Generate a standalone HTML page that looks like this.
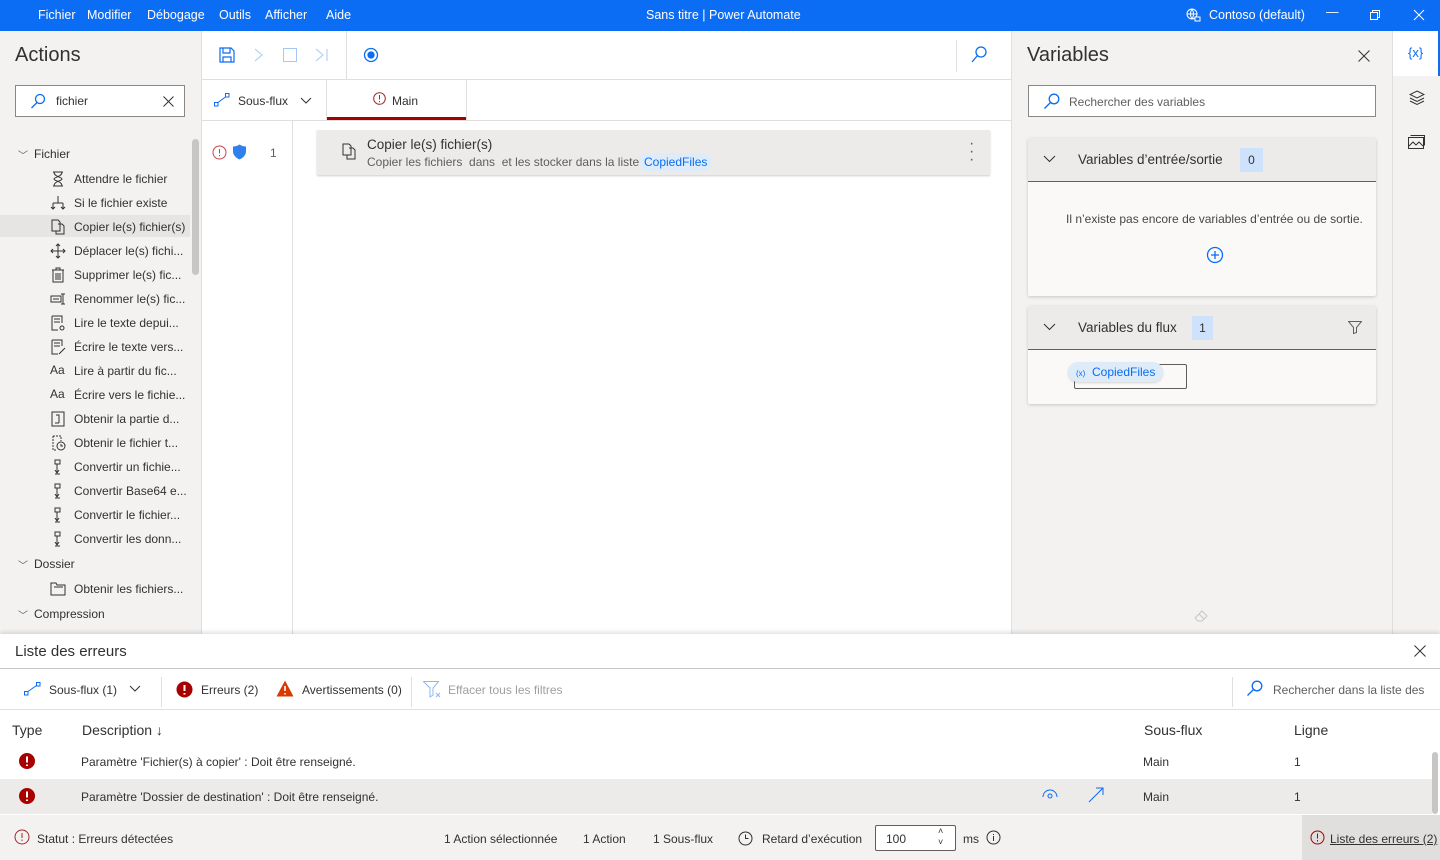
<!DOCTYPE html>
<html><head><meta charset="utf-8"><style>
*{box-sizing:border-box;margin:0;padding:0}
body{width:1440px;height:860px;overflow:hidden;font-family:"Liberation Sans",sans-serif;font-size:12px;color:#323130;position:relative;background:#fff}
.abs{position:absolute}
.title{left:0;top:0;width:1440px;height:31px;background:#0b6cf4;color:#fff;font-size:12.5px}
.title span{position:absolute;top:8px}
.left{left:0;top:31px;width:202px;height:603px;background:#f3f2f1;border-right:1px solid #e1dfdd}
.it{position:absolute;left:74px;font-size:12px;color:#323130}
.ic{position:absolute;left:50px;width:16px;height:16px}
.grp{position:absolute;left:34px;font-size:12px}
.chev{position:absolute;left:18px;font-size:10px;color:#605e5c}
.center{left:202px;top:31px;width:809px;height:603px;background:#fff}
.var{left:1011px;top:31px;width:381px;height:603px;background:#f3f2f1;border-left:1px solid #e1dfdd}
.strip{left:1392px;top:31px;width:48px;height:603px;background:#f3f2f1;border-left:1px solid #e1dfdd}
.card{background:#faf9f8;box-shadow:0 1px 3px rgba(0,0,0,.18);border-radius:2px}
.bottom{left:0;top:634px;width:1440px;height:226px;background:#fff;box-shadow:0 -2px 4px rgba(0,0,0,.12)}
</style></head><body>
<div class="abs title">
<span style="left:38px">Fichier</span><span style="left:87px">Modifier</span><span style="left:147px">Débogage</span><span style="left:219px">Outils</span><span style="left:265px">Afficher</span><span style="left:326px">Aide</span>
<span style="left:646px">Sans titre | Power Automate</span>
<svg class="abs" style="left:1185px;top:8px" width="16" height="14" viewBox="0 0 16 14" fill="none" stroke="#fff"><circle cx="7" cy="6" r="5"/><path d="M2 6h10M7 1c-2 3-2 7 0 10M7 1c2 3 2 7 0 10"/><path d="M10 9h5v4h-5z" fill="#0b6cf4"/></svg>
<span style="left:1209px">Contoso (default)</span>
<span style="left:1326px;top:5px">—</span>
<svg class="abs" style="left:1370px;top:10px" width="10" height="10" fill="none" stroke="#fff"><rect x="0.5" y="2.5" width="7" height="7"/><path d="M2.5 2.5v-2h7v7h-2"/></svg>
<svg class="abs" style="left:1413px;top:9px" width="12" height="12" stroke="#fff"><path d="M1 1l10 10M11 1L1 11"/></svg>
</div>

<div class="abs left">
<div class="abs" style="left:15px;top:13px;font-size:20px;color:#323130">Actions</div>
<div class="abs" style="left:15px;top:54px;width:170px;height:32px;background:#fff;border:1px solid #8a8886">
<svg class="abs" style="left:14px;top:7px" width="16" height="16" fill="none" stroke="#0b6cf4" stroke-width="1.3"><circle cx="10" cy="6" r="4.5"/><path d="M7 9.5L1.5 15"/></svg>
<span class="abs" style="left:40px;top:8px">fichier</span>
<svg class="abs" style="left:147px;top:10px" width="11" height="11" stroke="#323130"><path d="M.5.5l10 10M10.5.5l-10 10"/></svg>
</div>
<div class="chev" style="top:116px">﹀</div><div class="grp" style="top:116px">Fichier</div>
<div class="abs" style="left:0;top:184px;width:190px;height:22px;background:#e6e5e3"></div>
<div class="abs" style="left:192px;top:108px;width:7px;height:136px;background:#c8c6c4;border-radius:4px"></div>
<svg class="ic" style="top:140px" viewBox="0 0 16 16" fill="none" stroke="#323130"><path d="M3 1h10M3 15h10M4 1c0 5 8 5 8 7s-8 2-8 7M12 1c0 5-8 5-8 7s8 2 8 7"/></svg>
<div class="it" style="top:141px">Attendre le fichier</div>
<svg class="ic" style="top:164px" viewBox="0 0 16 16" fill="none" stroke="#323130"><path d="M8 1v7M3 8h10M3 8v6M13 8v6M1 12l2 2 2-2M11 12l2 2 2-2"/></svg>
<div class="it" style="top:165px">Si le fichier existe</div>
<svg class="ic" style="top:188px" viewBox="0 0 16 16" fill="none" stroke="#323130"><path d="M2 1h6l2 2v9H2zM8 5h4l2 2v8H6v-3"/></svg>
<div class="it" style="top:189px">Copier le(s) fichier(s)</div>
<svg class="ic" style="top:212px" viewBox="0 0 16 16" fill="none" stroke="#323130"><path d="M8 1v14M1 8h14M6 3l2-2 2 2M6 13l2 2 2-2M3 6L1 8l2 2M13 6l2 2-2 2"/></svg>
<div class="it" style="top:213px">Déplacer le(s) fichi...</div>
<svg class="ic" style="top:236px" viewBox="0 0 16 16" fill="none" stroke="#323130"><path d="M2 3h12M6 3V1h4v2M3 3v12h10V3M6 6v7M8 6v7M10 6v7"/></svg>
<div class="it" style="top:237px">Supprimer le(s) fic...</div>
<svg class="ic" style="top:260px" viewBox="0 0 16 16" fill="none" stroke="#323130"><path d="M1 5h10v6H1zM3 8h6M11 3h4M11 13h4M13 3v10"/></svg>
<div class="it" style="top:261px">Renommer le(s) fic...</div>
<svg class="ic" style="top:284px" viewBox="0 0 16 16" fill="none" stroke="#323130"><path d="M2 1h10v7M2 1v14h6M4 4h6M4 7h6"/><circle cx="12" cy="13" r="2"/></svg>
<div class="it" style="top:285px">Lire le texte depui...</div>
<svg class="ic" style="top:308px" viewBox="0 0 16 16" fill="none" stroke="#323130"><path d="M2 1h10v6M2 1v14h6M4 4h6M4 7h6M9 15l6-6"/></svg>
<div class="it" style="top:309px">Écrire le texte vers...</div>
<div class="ic" style="top:332px;font-size:12px">Aa</div><div class="it" style="top:333px">Lire à partir du fic...</div>
<div class="ic" style="top:356px;font-size:12px">Aa</div><div class="it" style="top:357px">Écrire vers le fichie...</div>
<svg class="ic" style="top:380px" viewBox="0 0 16 16" fill="none" stroke="#323130"><path d="M2 1h12v14H2zM6 4h3v8M5 12h4"/></svg>
<div class="it" style="top:381px">Obtenir la partie d...</div>
<svg class="ic" style="top:404px" viewBox="0 0 16 16" fill="none" stroke="#323130"><path d="M3 1h8v5M3 1v14h4" stroke-dasharray="2 1"/><circle cx="11" cy="11" r="4"/><path d="M11 9v2h2"/></svg>
<div class="it" style="top:405px">Obtenir le fichier t...</div>
<svg class="ic" style="top:428px" viewBox="0 0 16 16" fill="none" stroke="#323130"><path d="M5 1h5v4H5zM7 5v8M5 11l2 3 2-3M5 15h5"/></svg>
<div class="it" style="top:429px">Convertir un fichie...</div>
<svg class="ic" style="top:452px" viewBox="0 0 16 16" fill="none" stroke="#323130"><path d="M5 1h5v4H5zM7 5v8M5 11l2 3 2-3M5 15h5"/></svg>
<div class="it" style="top:453px">Convertir Base64 e...</div>
<svg class="ic" style="top:476px" viewBox="0 0 16 16" fill="none" stroke="#323130"><path d="M5 1h5v4H5zM7 5v8M5 11l2 3 2-3M5 15h5"/></svg>
<div class="it" style="top:477px">Convertir le fichier...</div>
<svg class="ic" style="top:500px" viewBox="0 0 16 16" fill="none" stroke="#323130"><path d="M5 1h5v4H5zM7 5v8M5 11l2 3 2-3M5 15h5"/></svg>
<div class="it" style="top:501px">Convertir les donn...</div>
<div class="chev" style="top:526px">﹀</div><div class="grp" style="top:526px">Dossier</div>
<svg class="ic" style="top:550px" viewBox="0 0 16 16" fill="none" stroke="#323130"><path d="M1 2h5l1 2h8v10H1zM4 6h9"/></svg>
<div class="it" style="top:551px">Obtenir les fichiers...</div>
<div class="chev" style="top:576px">﹀</div><div class="grp" style="top:576px">Compression</div>
</div>

<div class="abs center">
<div class="abs" style="left:0;top:48px;width:809px;height:1px;background:#e1dfdd"></div>
<svg class="abs" style="left:17px;top:16px" width="16" height="16" fill="none" stroke="#0b6cf4" stroke-width="1.2"><path d="M1 1h11l3 3v11H1zM4 1v5h7V1M4 15v-5h8v5"/></svg>
<svg class="abs" style="left:52px;top:17px" width="10" height="14" fill="none" stroke="#a6c8f5"><path d="M1 1l7 6-7 6"/></svg>
<svg class="abs" style="left:81px;top:17px" width="15" height="15" fill="none" stroke="#a6c8f5"><rect x=".5" y=".5" width="13" height="13"/></svg>
<svg class="abs" style="left:113px;top:17px" width="14" height="14" fill="none" stroke="#a6c8f5"><path d="M1 1l7 6-7 6M12 1v12"/></svg>
<div class="abs" style="left:144px;top:0;width:1px;height:48px;background:#e1dfdd"></div>
<svg class="abs" style="left:161px;top:16px" width="16" height="16" fill="none" stroke="#0b6cf4" stroke-width="1.3"><circle cx="8" cy="8" r="6.5"/><circle cx="8" cy="8" r="3" fill="#0b6cf4"/></svg>
<div class="abs" style="left:754px;top:9px;width:1px;height:32px;background:#e1dfdd"></div>
<svg class="abs" style="left:769px;top:15px" width="16" height="17" fill="none" stroke="#0b6cf4" stroke-width="1.3"><circle cx="10" cy="6" r="5"/><path d="M6.5 9.5L1 16"/></svg>
<div class="abs" style="left:0;top:89px;width:809px;height:1px;background:#e1dfdd"></div>
<svg class="abs" style="left:12px;top:62px" width="16" height="14" fill="none" stroke="#0b6cf4"><rect x=".5" y="9.5" width="3.5" height="3.5"/><rect x="11.5" y=".5" width="3.5" height="3.5"/><path d="M4 9.5l7.5-5.5"/></svg>
<span class="abs" style="left:36px;top:63px">Sous-flux</span>
<svg class="abs" style="left:98px;top:66px" width="12" height="7" fill="none" stroke="#323130"><path d="M1 1l5 5 5-5"/></svg>
<div class="abs" style="left:124px;top:49px;width:1px;height:40px;background:#e1dfdd"></div>
<div class="abs" style="left:264px;top:49px;width:1px;height:40px;background:#e1dfdd"></div>
<div class="abs" style="left:125px;top:86px;width:139px;height:3px;background:#a80000"></div>
<svg class="abs" style="left:171px;top:61px" width="13" height="13" fill="none" stroke="#a4262c"><circle cx="6.5" cy="6.5" r="5.8"/><path d="M6.5 3v4.5M6.5 9v1.2"/></svg>
<span class="abs" style="left:190px;top:63px">Main</span>
<div class="abs" style="left:90px;top:90px;width:1px;height:513px;background:#e1dfdd"></div>
<svg class="abs" style="left:10px;top:114px" width="15" height="15" fill="none" stroke="#c4484e"><circle cx="7.5" cy="7.5" r="6.5"/><path d="M7.5 4v4.5M7.5 10v1.2"/></svg>
<svg class="abs" style="left:30px;top:113px" width="15" height="16"><path d="M7.5 0.5C5 2 3 2.5 1 2.5v5C1 11 4 14 7.5 15.5 11 14 14 11 14 7.5v-5c-2 0-4-.5-6.5-2z" fill="#2f80ed"/></svg>
<span class="abs" style="left:68px;top:115px;color:#605e5c">1</span>
<div class="abs" style="left:115px;top:99px;width:673px;height:45px;background:#edebe9;box-shadow:0 1px 2px rgba(0,0,0,.2)">
<svg class="abs" style="left:25px;top:13px" width="15" height="18" fill="none" stroke="#323130"><path d="M1 1h6l2 2v9H1zM7 5h4l2 2v9H5v-4"/></svg>
<span class="abs" style="left:50px;top:7px;font-size:13.5px;color:#323130">Copier le(s) fichier(s)</span>
<span class="abs" style="left:50px;top:25px;color:#605e5c">Copier les fichiers &nbsp;dans &nbsp;et les stocker dans la liste</span>
<span class="abs" style="left:322px;top:23px;padding:2px 5px;background:#deecf9;border-radius:8px;color:#0b6cf4">CopiedFiles</span>
<span class="abs" style="left:652px;top:10px;font-size:16px;color:#605e5c;line-height:8px">·<br>·<br>·</span>
</div>
</div>

<div class="abs var">
<div class="abs" style="left:15px;top:13px;font-size:20px">Variables</div>
<svg class="abs" style="left:346px;top:19px" width="12" height="12" stroke="#323130"><path d="M.5.5l11 11M11.5.5l-11 11"/></svg>
<div class="abs" style="left:16px;top:54px;width:348px;height:32px;background:#fff;border:1px solid #8a8886">
<svg class="abs" style="left:14px;top:7px" width="17" height="17" fill="none" stroke="#0b6cf4" stroke-width="1.3"><circle cx="11" cy="6" r="4.8"/><path d="M7.5 9.5L1.5 15.5"/></svg>
<span class="abs" style="left:40px;top:9px;color:#605e5c">Rechercher des variables</span>
</div>
<div class="abs card" style="left:16px;top:107px;width:348px;height:158px">
<div class="abs" style="left:0;top:0;width:348px;height:44px;background:#edebe9;border-bottom:1px solid #0b6cf4"></div>
<svg class="abs" style="left:15px;top:17px" width="13" height="8" fill="none" stroke="#323130"><path d="M1 1l5.5 5.5L12 1"/></svg>
<span class="abs" style="left:50px;top:14px;font-size:13.5px">Variables d’entrée/sortie</span>
<span class="abs" style="left:212px;top:10px;width:23px;height:24px;background:#cfe2fb;text-align:center;line-height:24px">0</span>
<span class="abs" style="left:38px;top:74px;font-size:12px;color:#484644">Il n’existe pas encore de variables d’entrée ou de sortie.</span>
<svg class="abs" style="left:178px;top:108px" width="18" height="18" fill="none" stroke="#0b6cf4" stroke-width="1.3"><circle cx="9" cy="9" r="7.5"/><path d="M9 5v8M5 9h8"/></svg>
</div>
<div class="abs card" style="left:16px;top:275px;width:348px;height:98px">
<div class="abs" style="left:0;top:0;width:348px;height:44px;background:#edebe9;border-bottom:1px solid #0b6cf4"></div>
<svg class="abs" style="left:15px;top:17px" width="13" height="8" fill="none" stroke="#323130"><path d="M1 1l5.5 5.5L12 1"/></svg>
<span class="abs" style="left:50px;top:14px;font-size:13.5px">Variables du flux</span>
<span class="abs" style="left:164px;top:10px;width:21px;height:24px;background:#cfe2fb;text-align:center;line-height:24px">1</span>
<svg class="abs" style="left:320px;top:15px" width="14" height="13" fill="none" stroke="#605e5c"><path d="M.5.5h13L8.5 6.5v5l-3 1v-6z"/></svg>
<div class="abs" style="left:46px;top:58px;width:113px;height:25px;border:1px solid #605e5c;border-radius:2px"></div>
<span class="abs" style="left:40px;top:56px;padding:3px 8px;background:#deecf9;border-radius:10px;color:#0b6cf4;box-shadow:0 1px 2px rgba(0,0,0,.15)"><span style="font-size:8px">(x)</span>&nbsp; CopiedFiles</span>
</div>
<svg class="abs" style="left:182px;top:578px" width="16" height="14" fill="none" stroke="#c8c6c4"><path d="M1 9l7-7 5 5-5 5H4zM5 5l5 5"/></svg>
</div>

<div class="abs strip">
<div class="abs" style="left:0;top:0;width:48px;height:45px;background:#fff"></div>
<div class="abs" style="left:45px;top:0;width:3px;height:45px;background:#0b6cf4"></div>
<span class="abs" style="left:15px;top:14px;color:#0b6cf4;font-size:13px">{x}</span>
<svg class="abs" style="left:16px;top:59px" width="16" height="16" fill="none" stroke="#323130"><path d="M8 1l7 3.5-7 3.5-7-3.5zM1 8l7 3.5L15 8M1 11l7 3.5 7-3.5"/></svg>
<svg class="abs" style="left:15px;top:104px" width="17" height="14" fill="none" stroke="#323130"><rect x=".5" y="2.5" width="15" height="11"/><path d="M2.5.5h14v10M1 11l4-4 3 3 3-3 4 4"/></svg>
</div>

<div class="abs bottom">
<span class="abs" style="left:15px;top:9px;font-size:15px">Liste des erreurs</span>
<svg class="abs" style="left:1414px;top:11px" width="12" height="12" stroke="#323130"><path d="M.5.5l11 11M11.5.5l-11 11"/></svg>
<div class="abs" style="left:0;top:34px;width:1440px;height:1px;background:#c8c6c4"></div>
<svg class="abs" style="left:24px;top:48px" width="17" height="14" fill="none" stroke="#0b6cf4"><rect x=".5" y="9.5" width="3.5" height="3.5"/><rect x="12.5" y=".5" width="3.5" height="3.5"/><path d="M4 9.5l8.5-6"/></svg>
<span class="abs" style="left:49px;top:49px">Sous-flux (1)</span>
<svg class="abs" style="left:129px;top:51px" width="12" height="7" fill="none" stroke="#323130"><path d="M1 1l5 5 5-5"/></svg>
<div class="abs" style="left:161px;top:43px;width:1px;height:30px;background:#e1dfdd"></div>
<svg class="abs" style="left:176px;top:47px" width="17" height="17"><circle cx="8.5" cy="8.5" r="8" fill="#a80000"/><path d="M8.5 4v6M8.5 12v1.5" stroke="#fff" stroke-width="2"/></svg>
<span class="abs" style="left:201px;top:49px">Erreurs (2)</span>
<svg class="abs" style="left:276px;top:46px" width="18" height="17"><path d="M9 .5L17.5 16.5H.5z" fill="#d83b01"/><path d="M9 6v5M9 13v1.5" stroke="#fff" stroke-width="1.6"/></svg>
<span class="abs" style="left:302px;top:49px">Avertissements (0)</span>
<div class="abs" style="left:411px;top:43px;width:1px;height:30px;background:#e1dfdd"></div>
<svg class="abs" style="left:423px;top:47px" width="18" height="17" fill="none" stroke="#8ab8f5"><path d="M.5.5h15L10 7v7l-3 2V7z"/><path d="M13 12l4 4M17 12l-4 4"/></svg>
<span class="abs" style="left:448px;top:49px;color:#a19f9d">Effacer tous les filtres</span>
<div class="abs" style="left:1232px;top:43px;width:1px;height:30px;background:#e1dfdd"></div>
<svg class="abs" style="left:1246px;top:46px" width="17" height="17" fill="none" stroke="#0b6cf4" stroke-width="1.3"><circle cx="11" cy="6" r="4.8"/><path d="M7.5 9.5L1.5 15.5"/></svg>
<span class="abs" style="left:1273px;top:49px;color:#605e5c">Rechercher dans la liste des</span>
<div class="abs" style="left:0;top:75px;width:1440px;height:1px;background:#e1dfdd"></div>
<span class="abs" style="left:12px;top:88px;font-size:14px">Type</span>
<span class="abs" style="left:82px;top:88px;font-size:14px">Description ↓</span>
<span class="abs" style="left:1144px;top:88px;font-size:14px">Sous-flux</span>
<span class="abs" style="left:1294px;top:88px;font-size:14px">Ligne</span>
<svg class="abs" style="left:19px;top:119px" width="16" height="16"><circle cx="8" cy="8" r="8" fill="#a80000"/><path d="M8 3.5v6M8 11.5v1.5" stroke="#fff" stroke-width="2"/></svg>
<span class="abs" style="left:81px;top:121px">Paramètre 'Fichier(s) à copier' : Doit être renseigné.</span>
<span class="abs" style="left:1143px;top:121px">Main</span><span class="abs" style="left:1294px;top:121px">1</span>
<div class="abs" style="left:0;top:145px;width:1432px;height:35px;background:#edebe9"></div>
<svg class="abs" style="left:19px;top:154px" width="16" height="16"><circle cx="8" cy="8" r="8" fill="#a80000"/><path d="M8 3.5v6M8 11.5v1.5" stroke="#fff" stroke-width="2"/></svg>
<span class="abs" style="left:81px;top:156px">Paramètre 'Dossier de destination' : Doit être renseigné.</span>
<svg class="abs" style="left:1042px;top:154px" width="16" height="12" fill="none" stroke="#0b6cf4"><path d="M1 9a7 7 0 0 1 14 0"/><circle cx="8" cy="8" r="2"/></svg>
<svg class="abs" style="left:1088px;top:153px" width="16" height="16" fill="none" stroke="#0b6cf4"><path d="M1 15L15 1M8 1h7v7"/></svg>
<span class="abs" style="left:1143px;top:156px">Main</span><span class="abs" style="left:1294px;top:156px">1</span>
<div class="abs" style="left:1432px;top:118px;width:6px;height:62px;background:#c8c6c4;border-radius:3px"></div>
<div class="abs" style="left:0;top:181px;width:1440px;height:45px;background:#f3f2f1"></div>
<svg class="abs" style="left:14px;top:195px" width="16" height="16" fill="none" stroke="#a4262c"><circle cx="8" cy="8" r="7"/><path d="M8 4v5M8 10.5v1.5"/></svg>
<span class="abs" style="left:37px;top:198px">Statut : Erreurs détectées</span>
<span class="abs" style="left:444px;top:198px">1 Action sélectionnée</span>
<span class="abs" style="left:583px;top:198px">1 Action</span>
<span class="abs" style="left:653px;top:198px">1 Sous-flux</span>
<svg class="abs" style="left:738px;top:197px" width="15" height="15" fill="none" stroke="#323130"><circle cx="7.5" cy="7.5" r="6.5"/><path d="M7.5 3.5v4h3"/></svg>
<span class="abs" style="left:762px;top:198px">Retard d’exécution</span>
<div class="abs" style="left:875px;top:191px;width:81px;height:26px;background:#fff;border:1px solid #605e5c;border-radius:2px">
<span class="abs" style="left:10px;top:6px">100</span>
<span class="abs" style="left:62px;top:0;font-size:9px;line-height:11px">˄<br>˅</span></div>
<span class="abs" style="left:963px;top:198px">ms</span>
<svg class="abs" style="left:986px;top:196px" width="15" height="15" fill="none" stroke="#323130"><circle cx="7.5" cy="7.5" r="6.5"/><path d="M7.5 6v5M7.5 4v1"/></svg>
<div class="abs" style="left:1302px;top:181px;width:138px;height:45px;background:#e1dfdd"></div>
<svg class="abs" style="left:1310px;top:196px" width="15" height="15" fill="none" stroke="#a80000"><circle cx="7.5" cy="7.5" r="6.5"/><path d="M7.5 3.5v5M7.5 10v1.5"/></svg>
<span class="abs" style="left:1330px;top:198px;text-decoration:underline">Liste des erreurs (2)</span>
</div>
</body></html>
